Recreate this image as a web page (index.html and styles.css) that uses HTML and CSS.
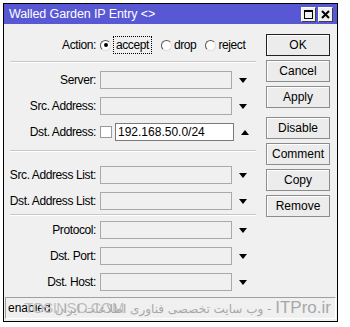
FILE: index.html
```html
<!DOCTYPE html>
<html lang="en">
<head>
  <meta charset="UTF-8" />
  <title>Walled Garden IP Entry</title>
  <link rel="stylesheet" href="styles.css">
</head>
<body>

  <div class="window">
    <div class="titlebar">
      <span class="title">Walled Garden IP Entry &lt;&gt;</span>
      <span class="tb-buttons">
        <span class="tb-btn"><span class="max-icon"></span></span>
        <span class="tb-btn">
          <svg width="9" height="9" viewBox="0 0 9 9"><path d="M1 1 L8 8 M8 1 L1 8" stroke="#000" stroke-width="2"/></svg>
        </span>
      </span>
    </div>

    <div class="content">
      <div class="form">
        <div class="row action-row">
          <label>Action:</label>
          <div class="radios">
            <span class="radio checked"></span><span class="radio-text focus">accept</span>
            <span class="radio"></span><span class="radio-text">drop</span>
            <span class="radio"></span><span class="radio-text last">reject</span>
          </div>
        </div>

        <div class="sep sep-1"></div>

        <div class="row"><label>Server:</label><div class="field"></div><span class="arrow"></span></div>
        <div class="row"><label>Src. Address:</label><div class="field"></div><span class="arrow"></span></div>
        <div class="row">
          <label>Dst. Address:</label>
          <div class="field-group">
            <span class="check"></span>
            <div class="field filled">192.168.50.0/24</div>
          </div>
          <span class="arrow up"></span>
        </div>

        <div class="sep sep-2"></div>

        <div class="row"><label>Src. Address List:</label><div class="field"></div><span class="arrow"></span></div>
        <div class="row"><label>Dst. Address List:</label><div class="field"></div><span class="arrow"></span></div>

        <div class="sep sep-3"></div>

        <div class="row"><label>Protocol:</label><div class="field"></div><span class="arrow"></span></div>
        <div class="row"><label>Dst. Port:</label><div class="field"></div><span class="arrow"></span></div>
        <div class="row"><label>Dst. Host:</label><div class="field"></div><span class="arrow"></span></div>
      </div>

      <div class="buttons">
        <button class="btn default">OK</button>
        <button class="btn">Cancel</button>
        <button class="btn">Apply</button>
        <button class="btn gap">Disable</button>
        <button class="btn">Comment</button>
        <button class="btn">Copy</button>
        <button class="btn">Remove</button>
      </div>
    </div>

    <div class="status">
      <span class="status-text">enabled</span>
      <span class="mark-left">TOSINSO.COM</span>
      <span class="mark-right" dir="rtl"><span class="mark-latin">ITPro.ir</span> - وب سایت تخصصی فناوری اطلاعات ایران</span>
    </div>
  </div>

</body>
</html>
```

FILE: styles.css
```css
body {
  margin: 0;
  background: #fff;
  font-family: 'Liberation Sans', Arial, sans-serif;
  font-size: 12px;
  color: #000;
}
.window {
  width: 333px;
  margin: 3px 0 0 3px;
  border: 1px solid #000;
  background: #f0f0f0;
}
.titlebar {
  height: 20px;
  background: #5858d4;
  color: #fff;
  display: flex;
  align-items: center;
  justify-content: space-between;
  padding: 0 4px 0 5px;
}
.title {
  font-size: 12.5px;
  letter-spacing: -0.1px;
}
.tb-buttons {
  display: flex;
  gap: 2px;
}
.tb-btn {
  width: 13px;
  height: 13px;
  background: #f0f0f0;
  border: 1px solid;
  border-color: #fff #404040 #404040 #fff;
  display: flex;
  align-items: center;
  justify-content: center;
}
.max-icon {
  width: 7px;
  height: 6px;
  border: 1px solid #000;
  border-top-width: 2px;
}

.content {
  display: flex;
}
.form {
  width: 258px;
  flex: none;
  padding-top: 9px;
}
.row {
  height: 26px;
  display: flex;
  align-items: center;
}
.row label {
  flex: none;
  width: 92px;
  text-align: right;
  margin-right: 4px;
  white-space: nowrap;
  letter-spacing: -0.4px;
}
.field {
  width: 130px;
  height: 16px;
  border: 1px solid #a9a9a9;
  background: #f0f0f0;
}
.field-group {
  display: flex;
  align-items: center;
}
.check {
  width: 10px;
  height: 10px;
  border: 1px solid #9a9a9a;
  background: #fff;
  margin-right: 3px;
}
.field.filled {
  width: 115px;
  background: #fff;
  border-color: #7a7a7a;
  line-height: 16px;
  padding-left: 2px;
  font-size: 12px;
}
.arrow {
  width: 0;
  height: 0;
  margin-left: 7px;
  border-left: 4px solid transparent;
  border-right: 4px solid transparent;
  border-top: 5px solid #000;
}
.arrow.up {
  border-top: 0;
  border-bottom: 5px solid #000;
}

.action-row {
  height: 24px;
}
.radios {
  display: flex;
  align-items: center;
  flex: none;
}
.radio {
  width: 9px;
  height: 9px;
  border-radius: 50%;
  border: 1px solid;
  border-color: #555 #ddd #ddd #555;
  background: #fff;
  display: flex;
  align-items: center;
  justify-content: center;
  margin-right: 2px;
}
.radio.checked::after {
  content: "";
  width: 4px;
  height: 4px;
  border-radius: 50%;
  background: #000;
}
.radio-text {
  margin-right: 9px;
  letter-spacing: -0.4px;
}
.radio-text.last {
  margin-right: 0;
}
.radio-text.focus {
  padding: 1px 2px;
  border: 1px dotted #000;
}

.sep {
  margin-left: 6px;
  width: 246px;
  height: 0;
  border-top: 1px solid #c8c8c8;
  border-bottom: 1px solid #fff;
}
.sep-1 {
  margin-top: 4px;
  margin-bottom: 4px;
}
.sep-2 {
  margin-top: 5px;
  margin-bottom: 10px;
}
.sep-3 {
  margin-bottom: 1px;
}

.buttons {
  margin-left: 4px;
  padding-top: 10px;
  display: flex;
  flex-direction: column;
  gap: 4px;
}
.btn {
  width: 64px;
  height: 22px;
  font-family: 'Liberation Sans', Arial, sans-serif;
  font-size: 12px;
  background: #ececec;
  border: 1px solid #8c8c8c;
  box-shadow: inset 1px 1px #fff;
  padding: 0;
}
.btn.default {
  border: 1px solid #222;
}
.btn.gap {
  margin-top: 5px;
}

.status {
  position: relative;
  margin: 2px 1px 2px 1px;
  height: 20px;
  border-top: 1px solid #a0a0a0;
  border-left: 1px solid #a0a0a0;
  border-right: 1px solid #fff;
  border-bottom: 1px solid #fff;
  display: flex;
  align-items: center;
  padding-left: 2px;
}
.mark-left {
  position: absolute;
  left: 18px;
  top: 1px;
  font-size: 15px;
  color: #bdbdbd;
  letter-spacing: -0.6px;
  text-shadow: 0 0 1px #fff;
}
.mark-right {
  position: absolute;
  right: 4px;
  top: 0;
  font-family: 'DejaVu Sans', sans-serif;
  font-size: 12px;
  color: #a8a8a8;
  white-space: nowrap;
}
.mark-latin {
  font-family: 'Liberation Sans', Arial, sans-serif;
  font-size: 17px;
}
```
